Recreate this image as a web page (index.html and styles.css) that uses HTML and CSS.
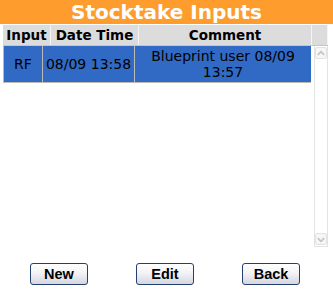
FILE: index.html
```html
<!DOCTYPE html>
<html>
<head>
<meta charset="utf-8">
<link rel="stylesheet" href="styles.css">
</head>
<body>
<div class="screen">
  <div class="title">Stocktake Inputs</div>
  <div class="grid">
    <div class="head">
      <div class="hc c-input">Input</div>
      <div class="hc c-date">Date Time</div>
      <div class="hc c-comment">Comment</div>
      <div class="hc c-pad"></div>
    </div>
    <div class="body">
      <div class="rows">
        <div class="row selected">
          <div class="bc b-input">RF</div>
          <div class="bc b-date">08/09 13:58</div>
          <div class="bc b-comment">Blueprint user 08/09 13:57</div>
        </div>
      </div>
      <div class="vscroll">
        <div class="arrow">
          <svg width="11" height="11" viewBox="0 0 11 11"><path d="M2 7 L5.5 3.5 L9 7" fill="none" stroke="#c4c4c4" stroke-width="2"/></svg>
        </div>
        <div class="track"></div>
        <div class="arrow">
          <svg width="11" height="11" viewBox="0 0 11 11"><path d="M2 4 L5.5 7.5 L9 4" fill="none" stroke="#c4c4c4" stroke-width="2"/></svg>
        </div>
      </div>
    </div>
  </div>
  <div class="buttons">
    <button class="btn">New</button>
    <button class="btn">Edit</button>
    <button class="btn">Back</button>
  </div>
</div>
</body>
</html>
```

FILE: styles.css
```css
html, body {
  margin: 0;
  padding: 0;
  background: #ffffff;
}
.screen {
  width: 333px;
  height: 292px;
  display: flex;
  flex-direction: column;
  font-family: "DejaVu Sans", Verdana, sans-serif;
  color: #000;
}
.title {
  height: 24px;
  line-height: 24px;
  background: #fe9c2d;
  color: #ffffff;
  font-weight: bold;
  font-size: 20px;
  text-align: center;
}
.grid {
  margin: 1px 0 0 3px;
  width: 325px;
  display: flex;
  flex-direction: column;
}
.head {
  display: flex;
  height: 20px;
  background: #f4f4f4;
  gap: 1px;
  border-bottom: 1px solid #c6c6c6;
}
.hc {
  background: #dcdcdc;
  font-weight: bold;
  font-size: 13.5px;
  line-height: 20px;
  text-align: center;
  white-space: nowrap;
  overflow: hidden;
}
.c-input { width: 47px; }
.c-date { width: 87px; }
.c-comment { width: 172px; }
.c-pad { width: 15px; }
.body {
  display: flex;
  height: 200px;
}
.rows {
  width: 309px;
  display: flex;
  flex-direction: column;
}
.row {
  display: flex;
  height: 36px;
  border-left: 1px solid #bdbab2;
  border-bottom: 1px solid #bdbab2;
  background: #bdbab2;
  gap: 1px;
}
.bc {
  background: #316ac5;
  font-size: 14px;
  display: flex;
  align-items: center;
  justify-content: center;
  text-align: center;
  white-space: nowrap;
}
.b-input { width: 38px; }
.b-date { width: 91px; }
.b-comment {
  width: 176px;
  white-space: normal;
  align-items: flex-start;
  line-height: 16px;
  padding-top: 2px;
  box-sizing: border-box;
}
.vscroll {
  width: 14px;
  margin-left: 3px;
  border: 1px solid #e6e2e0;
  border-top: none;
  display: flex;
  flex-direction: column;
  align-items: center;
  padding-top: 1px;
  padding-bottom: 1px;
  box-sizing: border-box;
  height: 201px;
}
.arrow {
  width: 12px;
  height: 12px;
  border: 1px solid #e2e2e2;
  border-radius: 2px;
  background: #f6f6f6;
  display: flex;
  align-items: center;
  justify-content: center;
  box-sizing: border-box;
}
.arrow svg { display: block; }
.track { flex: 1; }
.buttons {
  display: flex;
  gap: 48px;
  padding-left: 30px;
  margin-top: 17px;
}
.btn {
  width: 58px;
  height: 22px;
  margin: 0;
  padding: 0;
  border: 1px solid #23406e;
  border-radius: 3px;
  background: linear-gradient(#ffffff 0%, #f3f3f6 45%, #d4d6e0 100%);
  font-family: "Liberation Sans", Arial, sans-serif;
  font-weight: bold;
  font-size: 14.5px;
  color: #000;
  line-height: 20px;
}
```
